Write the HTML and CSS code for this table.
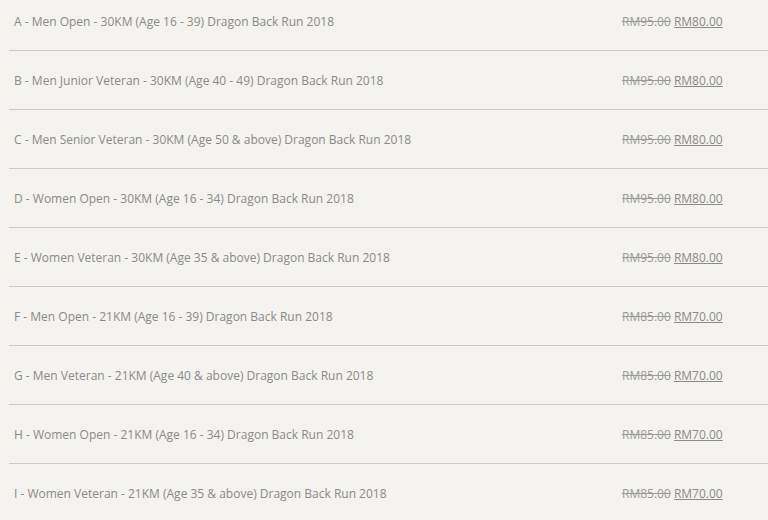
FILE: index.html
```html
<!DOCTYPE html>
<html>
<head>
<meta charset="utf-8">
<link rel="stylesheet" href="styles.css">
</head>
<body>
<div class="list">
  <div class="row"><span class="name">A - Men Open - 30KM (Age 16 - 39) Dragon Back Run 2018</span><span class="price"><del>RM95.00</del> <ins>RM80.00</ins></span></div>
  <div class="row"><span class="name">B - Men Junior Veteran - 30KM (Age 40 - 49) Dragon Back Run 2018</span><span class="price"><del>RM95.00</del> <ins>RM80.00</ins></span></div>
  <div class="row"><span class="name">C - Men Senior Veteran - 30KM (Age 50 &amp; above) Dragon Back Run 2018</span><span class="price"><del>RM95.00</del> <ins>RM80.00</ins></span></div>
  <div class="row"><span class="name">D - Women Open - 30KM (Age 16 - 34) Dragon Back Run 2018</span><span class="price"><del>RM95.00</del> <ins>RM80.00</ins></span></div>
  <div class="row"><span class="name">E - Women Veteran - 30KM (Age 35 &amp; above) Dragon Back Run 2018</span><span class="price"><del>RM95.00</del> <ins>RM80.00</ins></span></div>
  <div class="row"><span class="name">F - Men Open - 21KM (Age 16 - 39) Dragon Back Run 2018</span><span class="price"><del>RM85.00</del> <ins>RM70.00</ins></span></div>
  <div class="row"><span class="name">G - Men Veteran - 21KM (Age 40 &amp; above) Dragon Back Run 2018</span><span class="price"><del>RM85.00</del> <ins>RM70.00</ins></span></div>
  <div class="row"><span class="name">H - Women Open - 21KM (Age 16 - 34) Dragon Back Run 2018</span><span class="price"><del>RM85.00</del> <ins>RM70.00</ins></span></div>
  <div class="row"><span class="name">I - Women Veteran - 21KM (Age 35 &amp; above) Dragon Back Run 2018</span><span class="price"><del>RM85.00</del> <ins>RM70.00</ins></span></div>
</div>
</body>
</html>
```
FILE: styles.css
```css
html, body {
  margin: 0;
  padding: 0;
  background: #f4f3ef;
  overflow: hidden;
}
body {
  font-family: "Open Sans", "Liberation Sans", sans-serif;
  font-size: 12px;
  color: #8a8a88;
}
.list {
  margin-top: -8px;
  margin-left: 9px;
}
.row {
  display: grid;
  grid-template-columns: 613px 1fr;
  align-items: center;
  height: 58px;
  border-bottom: 1px solid #cbcac6;
}
.name {
  padding-left: 5px;
}
.price del {
  color: #9a9a98;
  text-decoration: line-through;
}
.price ins {
  color: #8a8a88;
  text-decoration: underline;
}
```
